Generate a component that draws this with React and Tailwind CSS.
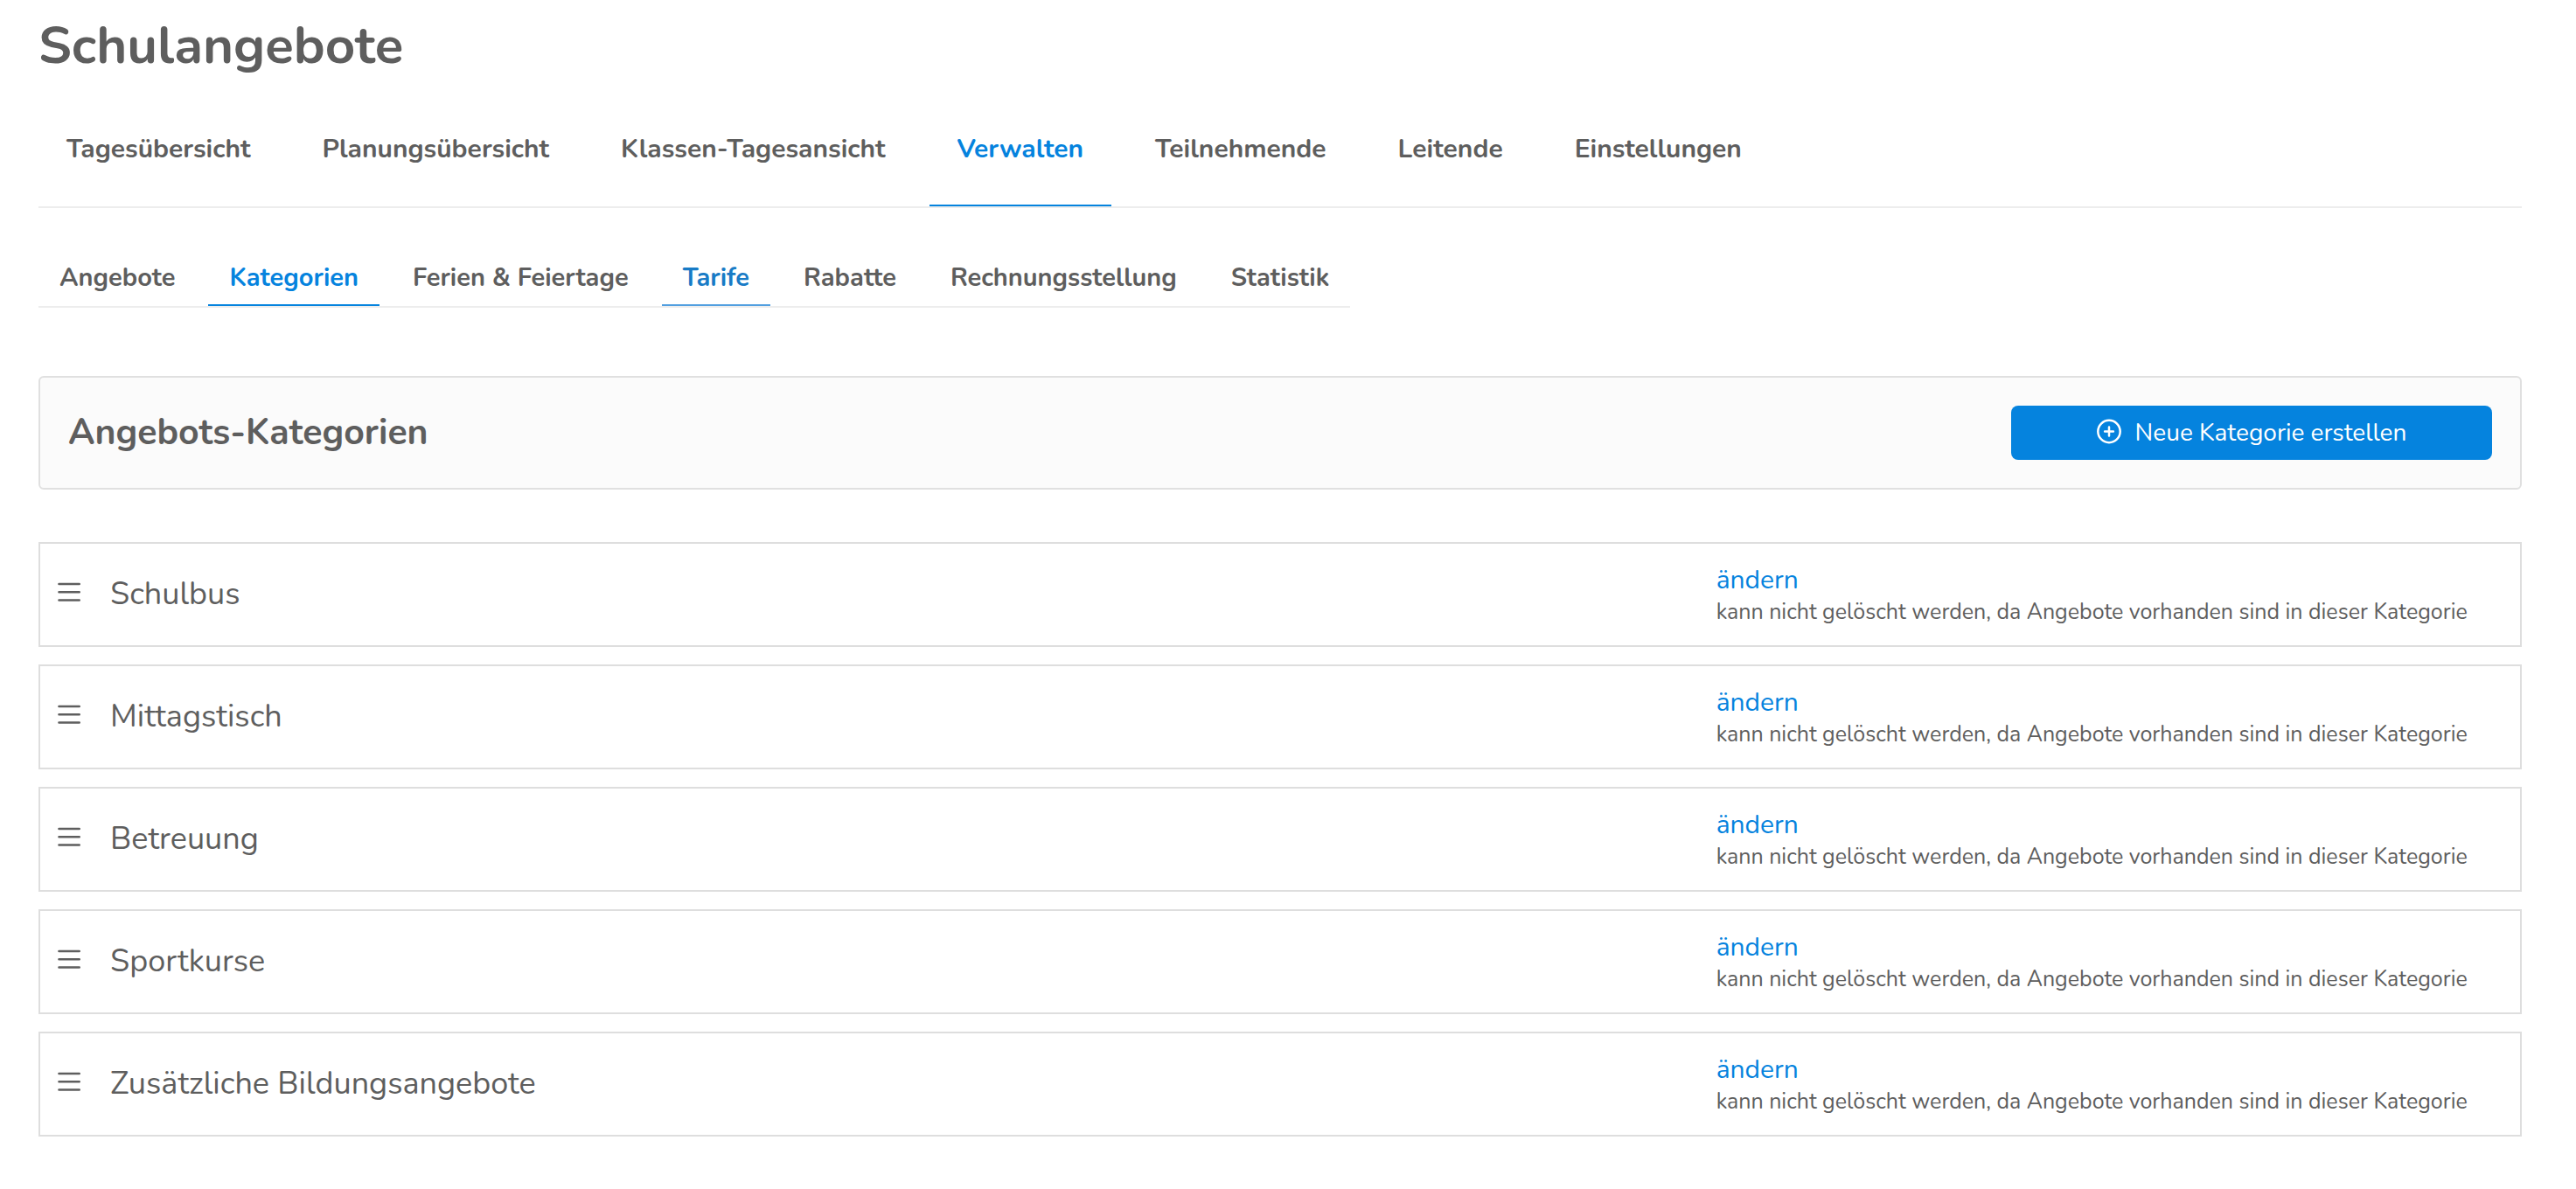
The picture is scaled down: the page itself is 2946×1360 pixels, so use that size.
import React from 'react';

const mainTabs = [
  { label: 'Tagesübersicht' },
  { label: 'Planungsübersicht' },
  { label: 'Klassen-Tagesansicht' },
  { label: 'Verwalten', active: true },
  { label: 'Teilnehmende' },
  { label: 'Leitende' },
  { label: 'Einstellungen' },
];

const subTabs = [
  { label: 'Angebote', state: 'default' },
  { label: 'Kategorien', state: 'active' },
  { label: 'Ferien & Feiertage', state: 'default' },
  { label: 'Tarife', state: 'hover' },
  { label: 'Rabatte', state: 'default' },
  { label: 'Rechnungsstellung', state: 'default' },
  { label: 'Statistik', state: 'default' },
];

const subTabStyles = {
  default: 'border-transparent',
  active: 'border-[#0583de] text-[#0583de]',
  hover: 'border-[#529fe0] text-[#187bc6]',
};

const kategorien = ['Schulbus', 'Mittagstisch', 'Betreuung', 'Sportkurse', 'Zusätzliche Bildungsangebote'];

const PlusCircleIcon = () => (
  <svg className="h-8 w-7 shrink-0" viewBox="0 0 28 32" fill="none" stroke="currentColor" strokeWidth="2.5" strokeLinecap="round" aria-hidden="true">
    <circle cx="14" cy="14.5" r="12.7" />
    <path d="M14 9.6v9.8M9.1 14.5h9.8" />
  </svg>
);

const DragIcon = () => (
  <svg className="h-7 w-7 shrink-0" viewBox="0 0 28 28" fill="none" stroke="currentColor" strokeWidth="2.6" strokeLinecap="round" aria-hidden="true">
    <path d="M1.5 2h23.2M1.5 11.3h23.2M1.5 20.5h23.2" />
  </svg>
);

const MainNav = () => (
  <nav className="mt-[18px] flex gap-[18px] border-b-2 border-[#ededed] text-[30px] leading-[42px] font-bold">
    {mainTabs.map((tab) => (
      <a
        key={tab.label}
        href="#"
        className={`border-b-2 px-8 pt-11 pb-[42px] whitespace-nowrap ${tab.active ? 'border-[#0583de] text-[#0583de]' : 'border-transparent'}`}
      >
        {tab.label}
      </a>
    ))}
  </nav>
);

const SubNav = () => (
  <nav className="mt-[46px] flex w-fit gap-3.5 border-b-2 border-[#ededed] text-[29px] leading-9 font-bold">
    {subTabs.map((tab) => (
      <a key={tab.label} href="#" className={`border-b-2 px-6 pt-4 pb-3 whitespace-nowrap ${subTabStyles[tab.state]}`}>
        {tab.label}
      </a>
    ))}
  </nav>
);

const KategorieRow = ({ name }) => (
  <li className="flex items-center border-2 border-[#dedede] py-5">
    <div className="flex flex-1 items-center gap-8 pl-5">
      <DragIcon />
      <span className="text-[36px] leading-10">{name}</span>
    </div>
    <div className="w-1/3 pt-1 pl-[26px]">
      <a href="#" className="block w-fit text-[30px] leading-9 text-[#0583de]">ändern</a>
      <p className="text-[25px] leading-9 whitespace-nowrap">
        kann nicht gelöscht werden, da Angebote vorhanden sind in dieser Kategorie
      </p>
    </div>
  </li>
);

const App = () => {
  return (
    <main className="bg-white pt-4 pr-[62px] pb-[60px] pl-11 font-['Nunito','Open_Sans',sans-serif] text-[#5e5e5e]">
      <h1 className="text-[60px] leading-[72px] font-bold">Schulangebote</h1>
      <MainNav />
      <SubNav />

      <section className="mt-[78px] flex items-center justify-between rounded-md border-2 border-[#e0e0e0] bg-[#fbfbfb] p-8">
        <h2 className="text-[41px] leading-[52px] font-bold">Angebots-Kategorien</h2>
        <button type="button" className="flex w-[550px] items-center justify-center gap-4 rounded-lg bg-[#0583de] py-[13px] text-[28px] leading-9 text-white">
          <PlusCircleIcon />
          Neue Kategorie erstellen
        </button>
      </section>

      <ul className="mt-[60px] flex flex-col gap-5">
        {kategorien.map((name) => (
          <KategorieRow key={name} name={name} />
        ))}
      </ul>
    </main>
  );
};

export default App;
